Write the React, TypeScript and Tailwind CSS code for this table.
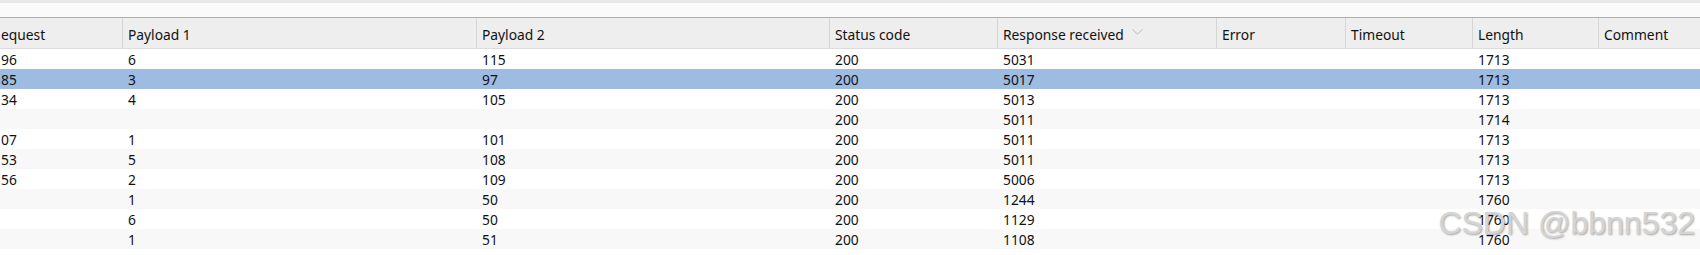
import React from "react";

const cols = "grid grid-cols-[122px_354px_353px_168px_219px_129px_127px_126px_1fr]";

const headers = ["equest", "Payload 1", "Payload 2", "Status code", "Response received", "Error", "Timeout", "Length", "Comment"];

const rows: string[][] = [
  ["96", "6", "115", "200", "5031", "", "", "1713", ""],
  ["85", "3", "97", "200", "5017", "", "", "1713", ""],
  ["34", "4", "105", "200", "5013", "", "", "1713", ""],
  ["", "", "", "200", "5011", "", "", "1714", ""],
  ["07", "1", "101", "200", "5011", "", "", "1713", ""],
  ["53", "5", "108", "200", "5011", "", "", "1713", ""],
  ["56", "2", "109", "200", "5006", "", "", "1713", ""],
  ["", "1", "50", "200", "1244", "", "", "1760", ""],
  ["", "6", "50", "200", "1129", "", "", "1760", ""],
  ["", "1", "51", "200", "1108", "", "", "1760", ""],
];

export default function App() {
  return (
    <div
      className="relative w-[1700px] h-[255px] overflow-hidden bg-white text-[13.8px] text-[#111]"
      style={{ fontFamily: '"Noto Sans", "Open Sans", sans-serif' }}
    >
      <div className="h-[3px] bg-[#e8e8e8]" />
      <div className="h-[14px] bg-[#fafafa]" />
      <div className="h-px bg-[#94b4dc]" />
      <div className={`${cols} h-[31px] bg-[#eeeeee] border-b border-[#dcdcdc]`}>
        {headers.map((h, i) => (
          <div
            key={i}
            className={`flex items-center whitespace-nowrap overflow-hidden leading-none pt-[3px] ${
              i === 0 ? "pl-[1px]" : "pl-[5px] border-l border-[#d6d6d6]"
            }`}
          >
            <span>{h}</span>
            {i === 4 && (
              <svg className="ml-[8px] mt-[-5px]" width="11" height="6" viewBox="0 0 11 6">
                <path d="M0.5 0.5 L5.5 5 L10.5 0.5" fill="none" stroke="#b8b8b8" strokeWidth="1" />
              </svg>
            )}
          </div>
        ))}
      </div>
      <div>
        {rows.map((r, ri) => (
          <div
            key={ri}
            className={`${cols} h-[20px] ${
              ri === 1 ? "bg-[#9ebbe1]" : ri % 2 === 1 ? "bg-[#f8f8f8]" : "bg-white"
            }`}
          >
            {r.map((c, ci) => (
              <div
                key={ci}
                className={`flex items-center whitespace-nowrap overflow-hidden leading-none pt-[1px] ${
                  ci === 0 ? "pl-[1px]" : "pl-[6px]"
                }`}
              >
                {c}
              </div>
            ))}
          </div>
        ))}
      </div>
      <div
        className="absolute top-[207px] right-[5px] leading-none text-[32px] text-[#d4d4d4] [text-shadow:1px_1px_2px_rgba(0,0,0,0.35)] whitespace-nowrap"
        style={{ fontFamily: '"Liberation Sans", Arial, sans-serif' }}
      >
        CSDN @bbnn532
      </div>
    </div>
  );
}
